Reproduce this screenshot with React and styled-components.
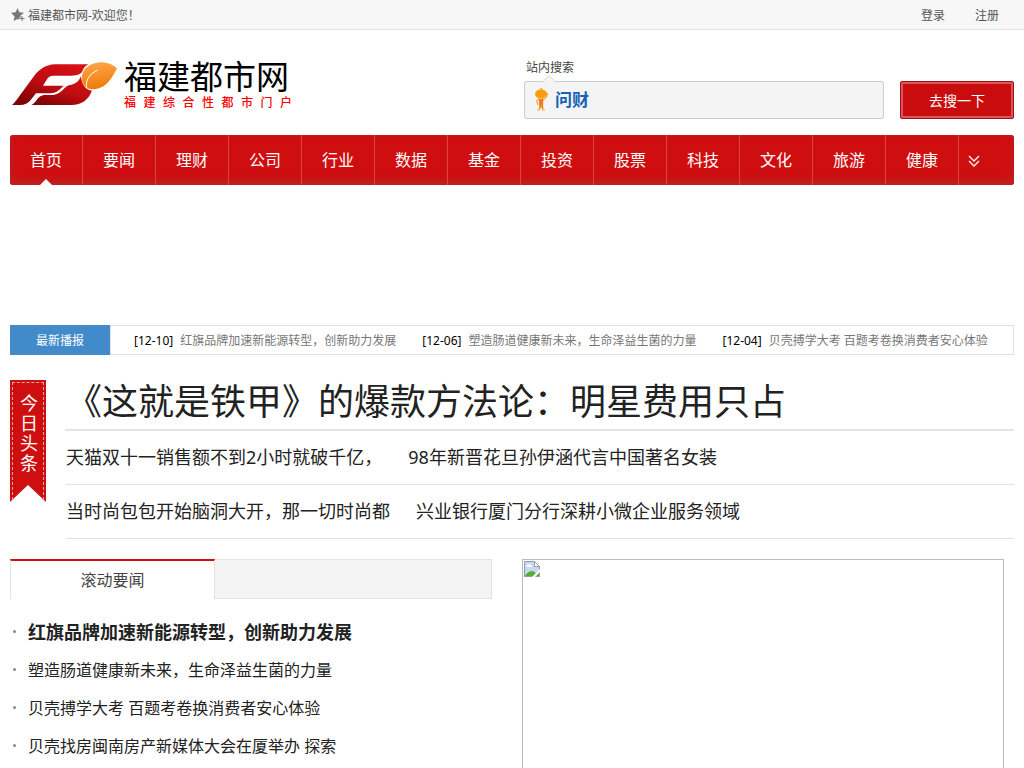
import React from "react";
import styled, { createGlobalStyle } from "styled-components";

const GlobalStyle = createGlobalStyle`
  * {
    box-sizing: border-box;
  }

  body {
    margin: 0;
    background: #fff;
    color: #222;
    font-family: "Noto Sans", "Noto Sans CJK SC", sans-serif;
    font-size: 12px;
  }

  a {
    color: inherit;
    text-decoration: none;
  }

  ul {
    list-style: none;
    margin: 0;
    padding: 0;
  }
`;

const NAV = ["首页", "要闻", "理财", "公司", "行业", "数据", "基金", "投资", "股票", "科技", "文化", "旅游", "健康"];

const TICKER = [
  { date: "[12-10]", title: "红旗品牌加速新能源转型，创新助力发展" },
  { date: "[12-06]", title: "塑造肠道健康新未来，生命泽益生菌的力量" },
  { date: "[12-04]", title: "贝壳搏学大考 百题考卷换消费者安心体验" },
];

const HEADLINES = [
  ["天猫双十一销售额不到2小时就破千亿，", "98年新晋花旦孙伊涵代言中国著名女装"],
  ["当时尚包包开始脑洞大开，那一切时尚都", "兴业银行厦门分行深耕小微企业服务领域"],
];

const NEWS = [
  "红旗品牌加速新能源转型，创新助力发展",
  "塑造肠道健康新未来，生命泽益生菌的力量",
  "贝壳搏学大考 百题考卷换消费者安心体验",
  "贝壳找房闽南房产新媒体大会在厦举办 探索",
];

const LogoMark = () => (
  <svg width="106" height="45" viewBox="12 15 318 135" aria-hidden="true">
    <defs>
      <linearGradient id="red" x1="0.8" y1="0" x2="0.1" y2="1">
        <stop offset="0" stopColor="#d81115" />
        <stop offset="0.5" stopColor="#bb0c0f" />
        <stop offset="1" stopColor="#780003" />
      </linearGradient>
      <linearGradient id="orange" x1="0.4" y1="0" x2="0.6" y2="1">
        <stop offset="0" stopColor="#ffa548" />
        <stop offset="1" stopColor="#ee7908" />
      </linearGradient>
    </defs>
    <path
      fill="url(#red)"
      d="M241 25H142C110 26 92 43 80 58L38 115C28 129 22 138 12 147H36C50 147 60 142 68 132L84 112H127C148 111 156 98 167 89H105L117 70C121 63 126 59 136 59H190C210 59 216 54 222 49C225 38 231 31 241 25Z"
    />
    <path
      fill="url(#red)"
      d="M219 60C212 80 196 86 182 88C167 95 160 113 136 117H112C98 117 92 124 86 132C81 139 76 145 70 147H190C222 147 242 130 252 104C234 102 221 87 219 60Z"
    />
    <path
      fill="url(#orange)"
      d="M327 37C311 22 290 16 268 20C235 24 216 49 223 77C227 93 242 102 263 99C296 96 314 63 327 37Z"
    />
    <path fill="none" stroke="#fff" strokeWidth="3" strokeLinecap="round" d="M236 96C230 74 246 52 268 43" />
  </svg>
);

const Mascot = () => (
  <svg width="15" height="24" viewBox="0 0 15 24" aria-hidden="true">
    <path d="M5.500 0h1.500v3H5.500z" fill="#f90" />
    <ellipse cx="6" cy="6" rx="6" ry="4.500" fill="#fb9d0b" />
    <path d="M3.500 10q2.500 2 5 0L8 17l.5 4H7l-1-4-.5 4H4l.3-4z" fill="#f27a05" />
    <path d="M8.500 12q4-2 4-7M3.500 11l-2 2 1.500 4" fill="none" stroke="#f68a10" />
    <path d="M2 22h3M7 22h3" stroke="#e8a55a" />
  </svg>
);

const App = () => (
  <>
    <GlobalStyle />
    <TopBar>
      <Welcome>
        <svg width="14" height="14" viewBox="0 0 14 14" aria-hidden="true">
          <path d="M6.500 0l1.800 4.300 4.700.4-3.600 3 .4 1.800-2 .2v2.200l-1.300-.8L2.600 13l1-4.500L0 4.700l4.700-.4z" fill="#777" />
          <path d="M11 8v5M8.500 10.500h5" stroke="#777" />
        </svg>
        福建都市网-欢迎您！
      </Welcome>
      <Account>
        <a href="#login">登录</a>
        <a href="#register">注册</a>
      </Account>
    </TopBar>

    <Page>
      <Header>
        <Logo href="#home">
          <LogoMark />
          <LogoText>
            <LogoName>福建都市网</LogoName>
            <Slogan>
              {[..."福建综合性都市门户"].map((char) => (
                <span key={char}>{char}</span>
              ))}
            </Slogan>
          </LogoText>
        </Logo>
        <Search>
          <SearchLabel htmlFor="search">站内搜索</SearchLabel>
          <SearchRow>
            <SearchBox>
              <Pointer width="16" height="9" viewBox="0 0 16 9" aria-hidden="true">
                <path d="M1 8.500L8 1.500l7 7" fill="#f4f4f4" stroke="#d5d5d5" />
              </Pointer>
              <Mascot />
              <Brand>问财</Brand>
              <SearchInput id="search" type="text" />
            </SearchBox>
            <SearchButton type="button">去搜一下</SearchButton>
          </SearchRow>
        </Search>
      </Header>

      <Nav>
        {NAV.map((name, i) => (
          <NavLink key={name} href="#channel" $active={i === 0}>
            {name}
          </NavLink>
        ))}
        <MoreButton type="button" aria-label="更多">
          <svg width="12" height="12" viewBox="0 0 12 12" fill="none" stroke="#fff" strokeWidth="1.3">
            <path d="M1 1l5 5 5-5M1 6l5 5 5-5" />
          </svg>
        </MoreButton>
      </Nav>

      <Ticker>
        <TickerLabel>最新播报</TickerLabel>
        <TickerList>
          {TICKER.map((item) => (
            <li key={item.date}>
              <TickerDate>{item.date}</TickerDate>
              <a href="#news">{item.title}</a>
            </li>
          ))}
        </TickerList>
      </Ticker>

      <Top>
        <Ribbon>
          <RibbonStitch>今日头条</RibbonStitch>
        </Ribbon>
        <TopNews>
          <TopTitle>
            <a href="#news">《这就是铁甲》的爆款方法论：明星费用只占</a>
          </TopTitle>
          {HEADLINES.map((row) => (
            <TopRow key={row[0]}>
              {row.map((title) => (
                <a key={title} href="#news">{title}</a>
              ))}
            </TopRow>
          ))}
        </TopNews>
      </Top>

      <Columns>
        <section>
          <Tabs>
            <Tab type="button">滚动要闻</Tab>
          </Tabs>
          <NewsList>
            {NEWS.map((title, i) => (
              <NewsItem key={title} $lead={i === 0}>
                <a href="#news">{title}</a>
              </NewsItem>
            ))}
          </NewsList>
        </section>
        <Slide>
          <svg width="16" height="16" viewBox="0 0 16 16" aria-hidden="true">
            <path d="M.5.5h10l5 5v10H.5z" fill="#c5d8f8" stroke="#9a9a9a" />
            <path d="M10.500.5v5h5z" fill="#fff" stroke="#9a9a9a" />
            <path d="M2 6q0-2 2-2 1-2 2.500 0 2 0 1 2z" fill="#fff" />
            <path d="M1 15q2-4 6-5 3 0 5 2l3-1v4z" fill="#56ad35" />
            <path d="M8 16l8-8v3l-5 5z" fill="#fff" />
          </svg>
        </Slide>
      </Columns>
    </Page>
  </>
);

const TopBar = styled.div`
  display: flex;
  justify-content: space-between;
  align-items: center;
  height: 30px;
  padding: 0 25px 0 11px;
  background: #f7f7f7;
  border-bottom: 1px solid #e3e3e3;
  color: #555;
`;

const Welcome = styled.div`
  display: flex;
  align-items: center;
  gap: 3px;
`;

const Account = styled.div`
  display: flex;
  gap: 30px;
`;

const Page = styled.main`
  padding: 0 10px;
`;

const Header = styled.header`
  display: flex;
  justify-content: space-between;
  align-items: flex-start;
  height: 105px;
  padding-top: 28px;
`;

const Logo = styled.a`
  display: flex;
  gap: 6px;
  padding: 3px 0 0 2px;
  font-family: "Liberation Sans", "Noto Sans CJK SC", sans-serif;
`;

const LogoText = styled.div`
  width: 168px;
`;

const LogoName = styled.div`
  font-size: 33px;
  line-height: 34px;
  white-space: nowrap;
  color: #000;
`;

const Slogan = styled.div`
  display: flex;
  justify-content: space-between;
  font-size: 12px;
  line-height: 16px;
  font-weight: 500;
  color: #f00;
`;

const Search = styled.form`
  width: 490px;
`;

const SearchLabel = styled.label`
  display: block;
  padding-left: 2px;
  line-height: 20px;
  margin-bottom: 3px;
  color: #444;
`;

const SearchRow = styled.div`
  display: flex;
  gap: 16px;
`;

const SearchBox = styled.div`
  position: relative;
  flex: 1;
  display: flex;
  align-items: center;
  height: 38px;
  padding: 0 10px;
  background: #f4f4f4;
  border: 1px solid #ccc;
  border-radius: 2px;
`;

const Pointer = styled.svg`
  position: absolute;
  left: 16px;
  top: -8px;
`;

const Brand = styled.span`
  margin-left: 5px;
  font-size: 17px;
  line-height: 34px;
  font-weight: 700;
  color: #1763b3;
`;

const SearchInput = styled.input`
  flex: 1;
  min-width: 0;
  height: 36px;
  margin-left: 8px;
  border: 0;
  outline: 0;
  background: transparent;
  font: inherit;
`;

const SearchButton = styled.button`
  width: 114px;
  height: 38px;
  padding: 0;
  border: 1px solid #a90c14;
  border-radius: 2px;
  background: #c90d0f;
  box-shadow: inset 0 0 0 2px #d9575a;
  color: #fff;
  font-family: inherit;
  font-size: 14px;
`;

const Nav = styled.nav`
  display: flex;
  height: 50px;
  border-radius: 3px;
  background: #cf0e10;
  box-shadow: inset 0 -4px 8px #b92629;
  margin-bottom: 140px;
`;

const NavLink = styled.a`
  position: relative;
  width: 73px;
  border-right: 1px solid #d84a35;
  line-height: 50px;
  text-align: center;
  font-size: 16px;
  color: #fff;

  &::after {
    content: "";
    display: ${(props) => (props.$active ? "block" : "none")};
    position: absolute;
    left: 30px;
    bottom: 0;
    border: 6px solid transparent;
    border-top: 0;
    border-bottom-color: #fff;
  }
`;

const MoreButton = styled.button`
  display: flex;
  align-items: center;
  padding: 2px 9px 0;
  border: 0;
  background: transparent;
`;

const Ticker = styled.div`
  display: flex;
  height: 30px;
  margin-bottom: 25px;
`;

const TickerLabel = styled.div`
  width: 100px;
  background: #428bca;
  color: #fff;
  text-align: center;
  line-height: 32px;
`;

const TickerList = styled.ul`
  flex: 1;
  display: flex;
  gap: 26px;
  padding-left: 23px;
  border: 1px solid #e3e3e3;
  line-height: 30px;
  white-space: nowrap;
  overflow: hidden;
  color: #777;
`;

const TickerDate = styled.span`
  margin-right: 7px;
  color: #000;
`;

const Top = styled.section`
  display: flex;
  align-items: flex-start;
  gap: 19px;
  margin-bottom: 20px;
`;

const Ribbon = styled.div`
  width: 36px;
  height: 122px;
  padding: 2px;
  background: #cf0e10;
  clip-path: polygon(0 0, 100% 0, 100% 100%, 50% 86%, 0 100%);
`;

const RibbonStitch = styled.div`
  height: 118px;
  padding: 10px 4px 0 7px;
  border: 1px dashed #f0a8a8;
  border-bottom: 0;
  color: #fff;
  font-size: 18px;
  line-height: 20px;
`;

const TopNews = styled.div`
  flex: 1;
  min-width: 0;
`;

const TopTitle = styled.h1`
  margin: 0;
  padding-left: 1px;
  height: 51px;
  border-bottom: 2px solid #e3e3e3;
  font-size: 36px;
  font-weight: 400;
  line-height: 44px;
  white-space: nowrap;
`;

const TopRow = styled.div`
  display: flex;
  gap: 26px;
  height: 54px;
  margin-left: 1px;
  border-bottom: 1px solid #e3e3e3;
  font-size: 18px;
  line-height: 52px;
  white-space: nowrap;
`;

const Columns = styled.div`
  display: grid;
  grid-template-columns: 1fr 1fr;
  gap: 30px;
  padding-right: 10px;
`;

const Tabs = styled.div`
  display: flex;
  height: 40px;
  border: 1px solid #e3e3e3;
  border-left: 0;
  background: #f4f4f4;
`;

const Tab = styled.button`
  width: 205px;
  height: 40px;
  margin-top: -1px;
  padding: 0 0 2px;
  border: 1px solid #e3e3e3;
  border-top: 2px solid #cf0e10;
  border-bottom: 0;
  background: #fff;
  color: #444;
  font-family: inherit;
  font-size: 16px;
`;

const NewsList = styled.ul`
  padding-top: 13px;
`;

const NewsItem = styled.li`
  display: flex;
  align-items: center;
  gap: 12px;
  height: 38px;
  padding-left: 3px;
  font-size: ${(props) => (props.$lead ? "18px" : "16px")};
  font-weight: ${(props) => (props.$lead ? 700 : 400)};
  white-space: nowrap;

  &::before {
    content: "";
    width: 3px;
    height: 3px;
    border-radius: 50%;
    background: #888;
  }
`;

const Slide = styled.div`
  min-height: 240px;
  padding: 1px;
  border: 1px solid #bbb;
`;

export default App;
